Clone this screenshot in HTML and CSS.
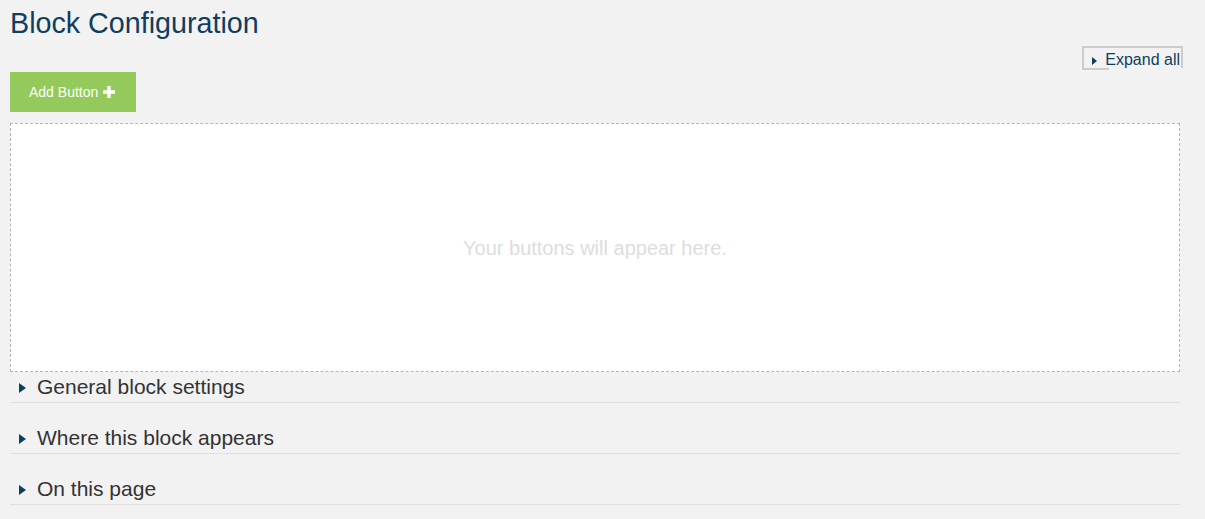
FILE: index.html
```html
<!DOCTYPE html>
<html>
<head>
<meta charset="utf-8">
<link rel="stylesheet" href="styles.css">
</head>
<body>
<div class="page">
  <h1 class="title">Block Configuration</h1>
  <div class="expand-row">
    <a class="expand-all"><svg class="tri-s" viewBox="0 0 5 8" width="5" height="8"><path d="M0 0L5 4L0 8z" fill="#0f3e5f"/></svg><span class="expand-text">Expand all</span></a>
  </div>
  <button class="add-btn">Add Button <svg class="plus" viewBox="0 0 12 12" width="12" height="12"><path d="M4.3 0h3.4v4.3H12v3.4H7.7V12H4.3V7.7H0V4.3h4.3z" fill="#fff"/></svg></button>
  <div class="dropzone">
    <span class="placeholder">Your buttons will appear here.</span>
  </div>
  <div class="section"><svg class="tri" viewBox="0 0 7 10" width="7" height="10"><path d="M0 0L7 5L0 10z" fill="#0f3e5f"/></svg><span class="sec-title">General block settings</span></div>
  <div class="section"><svg class="tri" viewBox="0 0 7 10" width="7" height="10"><path d="M0 0L7 5L0 10z" fill="#0f3e5f"/></svg><span class="sec-title">Where this block appears</span></div>
  <div class="section"><svg class="tri" viewBox="0 0 7 10" width="7" height="10"><path d="M0 0L7 5L0 10z" fill="#0f3e5f"/></svg><span class="sec-title">On this page</span></div>
</div>
</body>
</html>
```
FILE: styles.css
```css
html, body {
  margin: 0;
  padding: 0;
  background: #f2f2f2;
}
body {
  font-family: "Liberation Sans", Arial, sans-serif;
  color: #333;
}
.page {
  width: 1170px;
  padding: 0 0 0 10px;
}
.title {
  margin: 0;
  padding-top: 6px;
  font-size: 28.7px;
  font-weight: normal;
  line-height: 34px;
  color: #0f3e5f;
}
.expand-row {
  display: flex;
  justify-content: flex-end;
  margin-top: 6px;
  margin-right: -3px;
  height: 24px;
}
.expand-all {
  display: flex;
  align-items: center;
  border: 2px solid #cccccc;
  border-bottom: none;
  position: relative;
  padding: 0 0 0 8px;
  height: 20px;
  font-size: 16px;
  color: #0f3e5f;
}
.expand-all::after {
  content: "";
  position: absolute;
  left: -2px;
  bottom: -2px;
  width: 27px;
  height: 2px;
  background: #cccccc;
}
.tri-s {
  display: block;
  margin-top: 5px;
}
.expand-text {
  margin-left: 8px;
  padding-right: 1px;
  line-height: 20px;
  margin-top: 3px;
}
.tri {
  display: block;
  flex: none;
  margin-top: 1px;
}
.add-btn {
  display: flex;
  align-items: center;
  gap: 5px;
  margin-top: 2px;
  height: 40px;
  width: 126px;
  padding: 0 0 0 19px;
  border: none;
  background: #94c95b;
  color: #fff;
  font-family: "Liberation Sans", Arial, sans-serif;
  font-size: 14px;
}
.plus {
  display: block;
  margin-top: -1px;
}
.dropzone {
  margin-top: 11px;
  height: 247px;
  border: 1px dashed #b3b3b3;
  background: #fff;
  display: flex;
  align-items: center;
  justify-content: center;
}
.placeholder {
  font-size: 20px;
  color: #dddddd;
  margin-top: 1px;
}
.section {
  display: flex;
  align-items: center;
  height: 30px;
  padding-left: 9px;
  border-bottom: 1px solid #dfdfdf;
  margin-bottom: 20px;
}
.sec-title {
  margin-left: 11px;
  font-size: 21px;
  color: #333;
}
```
